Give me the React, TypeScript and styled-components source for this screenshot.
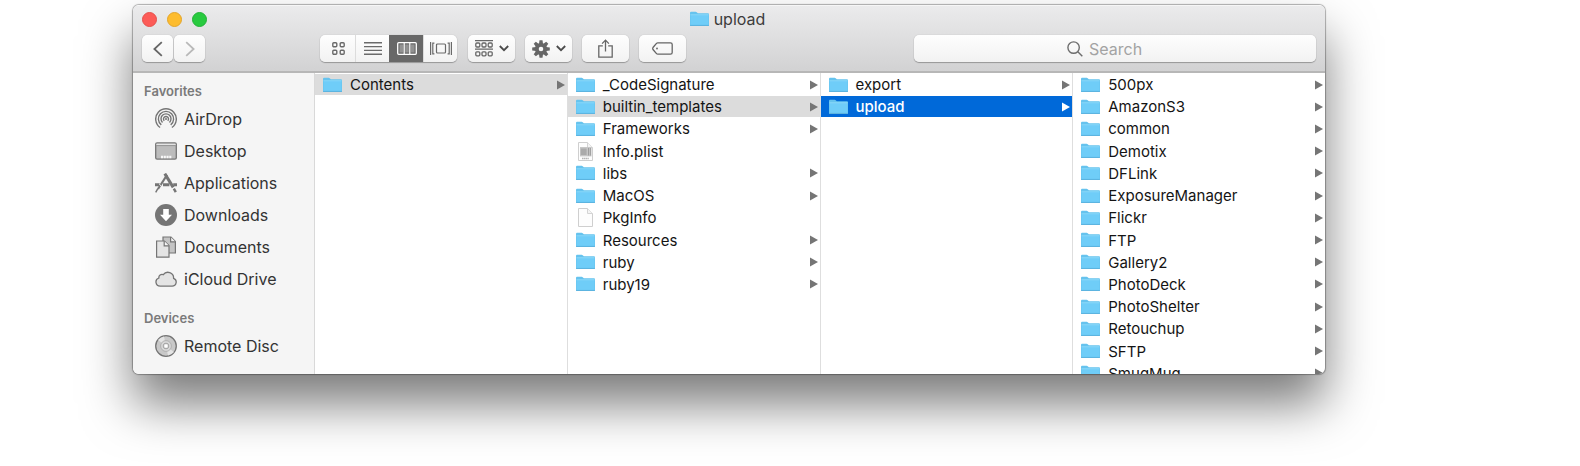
import React from 'react';
import styled, { createGlobalStyle, css } from 'styled-components';

const GlobalStyle = createGlobalStyle`
  *, *::before, *::after { box-sizing: border-box; }
  body {
    margin: 0;
    background: #fff;
    font-family: Inter, "Liberation Sans", sans-serif;
    font-size: 15px;
    color: #141414;
  }
  button, input { font: inherit; }
  ul { list-style: none; margin: 0; padding: 0; }
  a { color: inherit; text-decoration: none; }
  svg { display: block; flex: none; }
`;

const Page = styled.div`
  padding: 5px 255px 92px 133px;
  overflow: hidden;
`;

const Window = styled.main`
  border-radius: 6px;
  background: #fff;
  box-shadow: 0 0 1px 1px rgba(0, 0, 0, 0.3), 0 30px 50px rgba(0, 0, 0, 0.52);
  overflow: hidden;
`;

const Header = styled.header`
  background: linear-gradient(#ebebec, #d2d2d3);
  border-top: 1px solid #f6f6f6;
  border-bottom: 2px solid #b7b7b7;
  padding-bottom: 9px;
`;

const TitleBar = styled.div`
  display: grid;
  grid-template-columns: 1fr auto 1fr;
  align-items: center;
  height: 26px;
  padding: 0 12px 0 9px;
`;

const Lights = styled.div`
  display: flex;
  gap: 10px;
`;

const Light = styled.button<{ $fill: string; $edge: string }>`
  width: 15px;
  height: 15px;
  padding: 0;
  border-radius: 50%;
  border: 1px solid ${(p) => p.$edge};
  background: ${(p) => p.$fill};
`;

const Title = styled.h1`
  display: flex;
  align-items: center;
  gap: 5px;
  margin: 0;
  font-size: 16px;
  font-weight: 400;
  line-height: 20px;
  color: #3c3c3c;
`;

const Toolbar = styled.div`
  display: flex;
  align-items: center;
  padding: 3px 9px 0;
`;

const raised = css`
  border: 0;
  border-radius: 5px;
  background: linear-gradient(#fefefe, #f2f2f2);
  box-shadow: 0 1px 1px rgba(0, 0, 0, 0.28), 0 0 1px rgba(0, 0, 0, 0.25);
`;

const Cluster = styled.div<{ $gap: number }>`
  display: flex;
  gap: ${(p) => p.$gap}px;
`;

const Tools = styled.div`
  display: flex;
  gap: 11px;
  margin: 0 24px 0 115px;
`;

const ToolButton = styled.button<{ $width: number }>`
  ${raised}
  display: flex;
  align-items: center;
  justify-content: center;
  gap: 6px;
  width: ${(p) => p.$width}px;
  height: 27px;
  padding: 0;
  color: #666;
  &:disabled { color: #b9b9b9; }
`;

const Segments = styled.div`
  ${raised}
  display: flex;
  height: 27px;
  padding-left: 1px;
  overflow: hidden;
`;

const Segment = styled.button`
  display: flex;
  align-items: center;
  justify-content: center;
  width: 34px;
  padding: 0;
  border: 0;
  background: none;
  color: #6a6a6a;
  & + & { border-left: 1px solid #dcdcdc; }
  &[aria-pressed='true'] {
    background: #686868;
    border-color: #686868;
    color: #fff;
  }
`;

const SearchBox = styled.label`
  ${raised}
  display: flex;
  align-items: center;
  justify-content: center;
  gap: 6px;
  flex: 0 1 402px;
  height: 27px;
  margin-left: auto;
  color: #6d6d6d;
`;

const SearchInput = styled.input`
  width: 74px;
  padding: 0;
  border: 0;
  outline: 0;
  background: none;
  font-size: 16px;
  line-height: 20px;
  &::placeholder { color: #a3a3a3; opacity: 1; }
`;

const Body = styled.div`
  display: flex;
`;

const Sidebar = styled.nav`
  flex: none;
  width: 182px;
  padding: 8px 0 12px;
  background: #f5f5f5;
  border-right: 1px solid #d9d9d9;
`;

const Heading = styled.h2`
  margin: 0;
  padding-left: 11px;
  font-size: 13px;
  font-weight: 600;
  line-height: 20px;
  color: #7a7a7a;
  ul + & { margin-top: 13px; }
`;

const Place = styled.a`
  display: flex;
  align-items: center;
  gap: 7px;
  height: 32px;
  padding-left: 22px;
  font-size: 16px;
  color: #333;
`;

const Places = styled.ul`
  padding-top: 2px;
`;

const Columns = styled.div`
  display: flex;
  flex: 1;
  contain: size;
  overflow: hidden;
`;

const Column = styled.ul`
  display: grid;
  grid-template-rows: repeat(14, 21px);
  align-content: space-between;
  flex: 1 1 0;
  min-width: 0;
  height: 311px;
  padding-top: 1px;
  & + & { border-left: 1px solid #dedede; }
`;

type Tone = 'plain' | 'path' | 'active';

const Entry = styled.a<{ $tone: Tone }>`
  display: flex;
  align-items: center;
  height: 21px;
  padding: 0 2px 0 8px;
  background: ${(p) => ({ plain: 'none', path: '#dcdcdc', active: '#0069d9' })[p.$tone]};
  color: ${(p) => (p.$tone === 'active' ? '#fff' : 'inherit')};
  font-weight: ${(p) => (p.$tone === 'active' ? 500 : 400)};
`;

const EntryIcon = styled.span`
  display: flex;
  justify-content: center;
  width: 19px;
`;

const EntryName = styled.span`
  flex: 1;
  margin-left: 8px;
  white-space: nowrap;
`;

const Arrow = styled.svg<{ $tone: Tone }>`
  fill: ${(p) => (p.$tone === 'active' ? '#fff' : '#757575')};
`;

const FolderIcon = () => (
  <svg width="19" height="16" viewBox="0 0 19 16">
    <path d="M0 2Q0 .8 1 .8H5.6Q6.4.8 7 1.5L7.8 2.3H18Q19 2.3 19 3.2V14.2Q19 15 18.2 15H.8Q0 15 0 14.2Z" fill="#66c3ee" />
    <path d="M.5 4H18.5V13.8H.5Z" fill="#6fcdf8" />
    <path d="M.4 3.2H18.6V4.3H.4Z" fill="#8ad8f9" />
    <path d="M0 14H19V14.6Q19 15 18.2 15H.8Q0 15 0 14.6Z" fill="#5cb4e0" />
  </svg>
);

const PageIcon = ({ plist = false }: { plist?: boolean }) => (
  <svg width="15" height="19" viewBox="0 0 15 19">
    <path d="M.5 .5H9.5L14.5 5.5V18.5H.5Z" fill="#fdfdfd" stroke="#cfcfcf" />
    <path d="M9.5 .5V5.5H14.5" fill="#f4f4f4" stroke="#d4d4d4" />
    {plist && (
      <g>
        <rect x="2" y="5" width="11.5" height="9.4" fill="#c6c6c6" />
        <path d="M2.8 6.5H8.6V13H2.8Z" fill="#aaa" />
        <path d="M10.5 6V13.5M12.4 6V13.5" stroke="#999" strokeWidth=".9" />
        <path d="M4 16.5H11" stroke="#b5b5b5" strokeWidth="1.5" strokeDasharray="1.4 .4" />
      </g>
    )}
  </svg>
);

const Chevron = () => (
  <svg width="10" height="7" viewBox="0 0 10 7" fill="none" stroke="#4c4c4c" strokeWidth="1.8">
    <path d="M.8 1L5 5.2L9.2 1" />
  </svg>
);

const BackIcon = ({ forward = false }: { forward?: boolean }) => (
  <svg width="10" height="16" viewBox="0 0 10 16" fill="none" stroke="currentColor" strokeWidth="1.8">
    <path d={forward ? 'M1.2 1.2L8.6 8L1.2 14.8' : 'M8.8 1.2L1.4 8L8.8 14.8'} />
  </svg>
);

const GridIcon = () => (
  <svg width="13" height="13" viewBox="0 0 13 13" fill="none" stroke="currentColor" strokeWidth="1.4">
    {[0.8, 8.2].map((y) => [0.8, 8.2].map((x) => <rect key={`${x}${y}`} x={x} y={y} width="4" height="4" rx="1" />))}
  </svg>
);

const ListIcon = () => (
  <svg width="18" height="13" viewBox="0 0 18 13" stroke="currentColor" strokeWidth="1.4">
    <path d="M0 .8H18M0 4.6H18M0 8.4H18M0 12.2H18" />
  </svg>
);

const ColumnsIcon = () => (
  <svg width="20" height="13" viewBox="0 0 20 13">
    <rect x=".7" y=".7" width="18.6" height="11.6" rx="1" fill="none" stroke="currentColor" strokeWidth="1.3" />
    <path d="M2.5 2.5H6.2V10.5H2.5ZM8.2 2.5H11.8V10.5H8.2ZM13.8 2.5H17.5V10.5H13.8Z" fill="#929292" />
    <path d="M7.2 1V12M12.8 1V12" stroke="currentColor" strokeWidth="1.2" />
  </svg>
);

const CoverFlowIcon = () => (
  <svg width="22" height="13" viewBox="0 0 22 13" fill="none" stroke="currentColor" strokeWidth="1.2">
    <rect x="6.5" y="2" width="9" height="9" rx="1" />
    <path d="M.6 0V13M21.4 0V13M2.8 .6V12.4M2.8 1.2H4.4M2.8 11.8H4.4M19.2 .6V12.4M19.2 1.2H17.6M19.2 11.8H17.6" />
  </svg>
);

const GroupIcon = () => (
  <svg width="18" height="17" viewBox="0 0 18 17" fill="none" stroke="currentColor" strokeWidth="1.3">
    <path d="M0 .7H18M0 9.2H18" />
    {[3, 11.8].map((y) => [0.8, 7, 13.2].map((x) => <rect key={`${x}${y}`} x={x} y={y} width="4" height="4" rx="1" />))}
  </svg>
);

const GearIcon = () => (
  <svg width="18" height="18" viewBox="-9 -9 18 18" fill="currentColor">
    {[0, 45, 90, 135, 180, 225, 270, 315].map((a) => (
      <path key={a} d="M-2-5L-1.5-8.8H1.5L2-5Z" transform={`rotate(${a})`} />
    ))}
    <circle r="4.2" fill="none" stroke="currentColor" strokeWidth="3.8" />
  </svg>
);

const ShareIcon = () => (
  <svg width="15" height="19" viewBox="0 0 15 19" fill="none" stroke="currentColor" strokeWidth="1.3">
    <path d="M4.8 6.8H.8V18.2H14.2V6.8H10.2M7.5 1.2V12.5M4.1 4.6L7.5 1.1L10.9 4.6" />
  </svg>
);

const TagIcon = () => (
  <svg width="21" height="13" viewBox="0 0 21 13" fill="none" stroke="currentColor" strokeWidth="1.3">
    <path d="M5.8.8H18.5Q20.2.8 20.2 2.4V10.6Q20.2 12.2 18.5 12.2H5.8Q5 12.2 4.5 11.6L1 7.5Q.4 6.5 1 5.5L4.5 1.4Q5 .8 5.8.8Z" />
    <circle cx="5" cy="6.5" r=".9" fill="currentColor" stroke="none" />
  </svg>
);

const SearchIcon = () => (
  <svg width="16" height="16" viewBox="0 0 16 16" fill="none" stroke="currentColor" strokeWidth="1.4">
    <circle cx="6.6" cy="6.6" r="5.7" />
    <path d="M10.8 10.8L15.3 15.3" />
  </svg>
);

const AirDropIcon = () => (
  <svg width="22" height="22" viewBox="0 0 22 22" fill="none" stroke="#757575" strokeWidth="1.4">
    <path d="M5.1 19.5A10.3 10.3 0 1 1 16.9 19.5" />
    <path d="M6.3 16.9A7.6 7.6 0 1 1 15.7 16.9" />
    <path d="M7.5 14.4A5 5 0 1 1 14.5 14.4" />
    <path d="M9.3 12.8A2.5 2.5 0 1 1 12.7 12.8" />
    <circle cx="11" cy="11" r="1" fill="#757575" stroke="none" />
  </svg>
);

const DesktopIcon = () => (
  <svg width="22" height="18" viewBox="0 0 22 18">
    <rect x=".7" y=".9" width="20.6" height="16.2" rx="1.4" fill="#bcbcbc" stroke="#757575" strokeWidth="1.3" />
    <path d="M1.4 2.4H20.6" stroke="#e4e4e4" strokeWidth="1.4" />
    <path d="M1.4 3.6H20.6" stroke="#8a8a8a" strokeWidth=".8" />
    <path d="M6 15H16.4" stroke="#f8f8f8" strokeWidth="2.4" strokeDasharray="2.1 .65" />
  </svg>
);

const ApplicationsIcon = () => (
  <svg width="22" height="20" viewBox="0 0 22 20" fill="none" stroke="#757575">
    <path d="M12 2L3 16" strokeWidth="2.2" />
    <path d="M2.8 15.6L.7 19.4" strokeWidth="1.4" />
    <path d="M9.8.6L18.2 14.4" strokeWidth="3" />
    <path d="M18.8 15.6L20.8 19.2" strokeWidth="2.4" />
    <path d="M0 11.7H4.6M8 11.7H14.4M18.2 11.7H22" strokeWidth="3" />
    <path d="M4.4 11L6.2 13.4" stroke="#f5f5f5" strokeWidth=".8" />
  </svg>
);

const DownloadsIcon = () => (
  <svg width="22" height="22" viewBox="0 0 22 22">
    <circle cx="11" cy="11" r="11" fill="#757575" />
    <path d="M8.2 5H13.8V10.7H17L11 17.2L5 10.7H8.2Z" fill="#fff" />
  </svg>
);

const DocumentsIcon = () => (
  <svg width="22" height="22" viewBox="0 0 22 22" stroke="#757575" strokeWidth="1.2">
    <path d="M8 1H16L20.4 5.4V17H8Z" fill="#c4c4c4" />
    <path d="M15.6 1V5.8H20.4" fill="#efefef" />
    <path d="M1.6 5H9.4L14 9.6V21.2H1.6Z" fill="#e4e4e4" />
    <path d="M9.2 5V9.8H14" fill="#f5f5f5" />
  </svg>
);

const CloudIcon = () => (
  <svg width="22" height="16" viewBox="0 0 22 16">
    <path
      d="M5.2 15.2H17A4.1 4.1 0 0 0 18.6 7.3A5.7 5.7 0 0 0 8.3 3.7A3.1 3.1 0 0 0 3.9 7A4.2 4.2 0 0 0 5.2 15.2Z"
      fill="#e4e4e4"
      stroke="#757575"
      strokeWidth="1.3"
    />
  </svg>
);

const DiscIcon = () => (
  <svg width="22" height="22" viewBox="0 0 22 22">
    <circle cx="11" cy="11" r="10.3" fill="#c8c8c8" stroke="#757575" strokeWidth="1.3" />
    <path d="M11 11L3 5A10 10 0 0 1 9 1.6ZM11 11L19 17A10 10 0 0 1 13 20.4Z" fill="#e4e4e4" />
    <circle cx="11" cy="11" r="5.4" fill="#d8d8d8" stroke="#a8a8a8" strokeWidth=".8" />
    <circle cx="11" cy="11" r="2.8" fill="#e9e9e9" stroke="#989898" strokeWidth=".9" />
    <circle cx="11" cy="11" r="1.2" fill="#fff" />
  </svg>
);

const favorites = [
  { name: 'AirDrop', Icon: AirDropIcon },
  { name: 'Desktop', Icon: DesktopIcon },
  { name: 'Applications', Icon: ApplicationsIcon },
  { name: 'Downloads', Icon: DownloadsIcon },
  { name: 'Documents', Icon: DocumentsIcon },
  { name: 'iCloud Drive', Icon: CloudIcon },
];

const devices = [{ name: 'Remote Disc', Icon: DiscIcon }];

interface Item {
  name: string;
  kind?: 'folder' | 'file' | 'plist';
  tone?: Tone;
}

const columns: Item[][] = [
  [{ name: 'Contents', tone: 'path' }],
  [
    { name: '_CodeSignature' },
    { name: 'builtin_templates', tone: 'path' },
    { name: 'Frameworks' },
    { name: 'Info.plist', kind: 'plist' },
    { name: 'libs' },
    { name: 'MacOS' },
    { name: 'PkgInfo', kind: 'file' },
    { name: 'Resources' },
    { name: 'ruby' },
    { name: 'ruby19' },
  ],
  [{ name: 'export' }, { name: 'upload', tone: 'active' }],
  [
    '500px', 'AmazonS3', 'common', 'Demotix', 'DFLink', 'ExposureManager', 'Flickr',
    'FTP', 'Gallery2', 'PhotoDeck', 'PhotoShelter', 'Retouchup', 'SFTP', 'SmugMug',
  ].map((name) => ({ name })),
];

const PlaceList = ({ items }: { items: typeof favorites }) => (
  <Places>
    {items.map(({ name, Icon }) => (
      <li key={name}>
        <Place href="#"><Icon />{name}</Place>
      </li>
    ))}
  </Places>
);

const FileEntry = ({ name, kind = 'folder', tone = 'plain' }: Item) => (
  <li>
    <Entry href="#" $tone={tone}>
      <EntryIcon>{kind === 'folder' ? <FolderIcon /> : <PageIcon plist={kind === 'plist'} />}</EntryIcon>
      <EntryName>{name}</EntryName>
      {kind === 'folder' && (
        <Arrow $tone={tone} width="8" height="10" viewBox="0 0 8 10"><path d="M0 .6L8 5L0 9.4Z" /></Arrow>
      )}
    </Entry>
  </li>
);

export default function App() {
  return (
    <>
      <GlobalStyle />
      <Page>
        <Window>
          <Header>
            <TitleBar>
              <Lights>
                <Light aria-label="Close" $fill="#fc5b57" $edge="#e5504b" />
                <Light aria-label="Minimize" $fill="#fdbc2e" $edge="#e3a52a" />
                <Light aria-label="Zoom" $fill="#28ca3f" $edge="#22b237" />
              </Lights>
              <Title><FolderIcon />upload</Title>
            </TitleBar>
            <Toolbar>
              <Cluster $gap={1}>
                <ToolButton $width={31} aria-label="Back"><BackIcon /></ToolButton>
                <ToolButton $width={31} aria-label="Forward" disabled><BackIcon forward /></ToolButton>
              </Cluster>
              <Tools>
                <Segments role="group" aria-label="View">
                  <Segment aria-label="Icons" aria-pressed="false"><GridIcon /></Segment>
                  <Segment aria-label="List" aria-pressed="false"><ListIcon /></Segment>
                  <Segment aria-label="Columns" aria-pressed="true"><ColumnsIcon /></Segment>
                  <Segment aria-label="Cover Flow" aria-pressed="false"><CoverFlowIcon /></Segment>
                </Segments>
                <Cluster $gap={10}>
                  <ToolButton $width={47} aria-label="Arrange"><GroupIcon /><Chevron /></ToolButton>
                  <ToolButton $width={47} aria-label="Actions"><GearIcon /><Chevron /></ToolButton>
                  <ToolButton $width={47} aria-label="Share"><ShareIcon /></ToolButton>
                  <ToolButton $width={47} aria-label="Edit tags"><TagIcon /></ToolButton>
                </Cluster>
              </Tools>
              <SearchBox>
                <SearchIcon />
                <SearchInput type="text" placeholder="Search" aria-label="Search" />
              </SearchBox>
            </Toolbar>
          </Header>
          <Body>
            <Sidebar>
              <Heading>Favorites</Heading>
              <PlaceList items={favorites} />
              <Heading>Devices</Heading>
              <PlaceList items={devices} />
            </Sidebar>
            <Columns>
              {columns.map((items, i) => (
                <Column key={i}>
                  {items.map((item) => <FileEntry key={item.name} {...item} />)}
                </Column>
              ))}
            </Columns>
          </Body>
        </Window>
      </Page>
    </>
  );
}
